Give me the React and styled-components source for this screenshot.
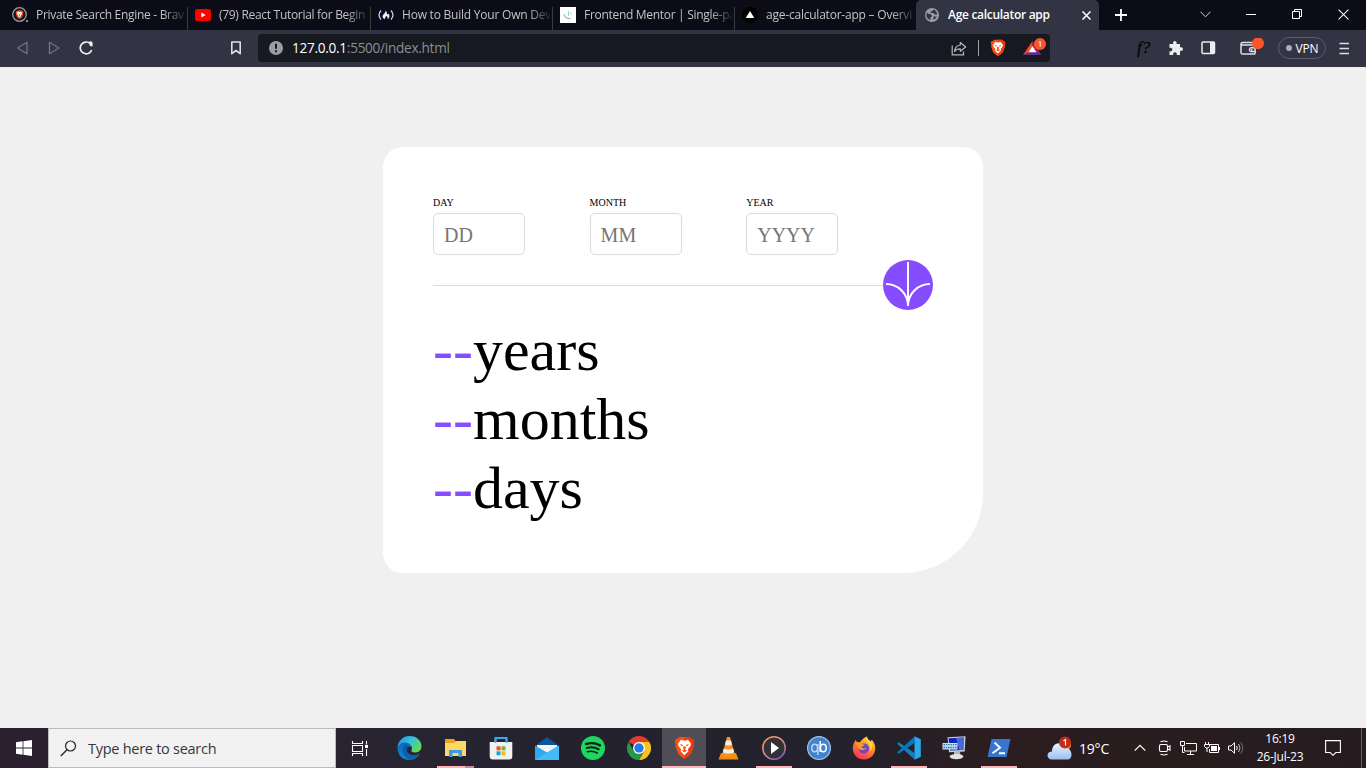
import React from "react";
import styled, { createGlobalStyle } from "styled-components";

const UI = `"Open Sans", "Noto Sans", sans-serif`;
const SERIF = `"Liberation Serif", "Times New Roman", serif`;

const Global = createGlobalStyle`
  *, *::before, *::after { box-sizing: border-box; }
  html, body { margin: 0; padding: 0; background: #f0f0f0; }
  svg { display: block; flex: none; }
`;

const Screen = styled.div`
  width: 1366px;
  height: 768px;
  display: flex;
  flex-direction: column;
  overflow: hidden;
  font-family: ${UI};
`;

/* ---------- browser frame ---------- */

const TabStrip = styled.header`
  height: 30px;
  flex: none;
  display: flex;
  background: #0b0c15;
  color: #fff;
`;

const Tab = styled.div`
  width: ${(p) => (p.$active ? 183 : p.$w || 182)}px;
  flex: none;
  height: 30px;
  display: flex;
  align-items: center;
  gap: ${(p) => p.$gap ?? 8}px;
  padding: 0 ${(p) => (p.$active ? 8 : 2)}px 0 ${(p) => p.$pl ?? 8}px;
  background: ${(p) => (p.$active ? "#323443" : "transparent")};
  border-radius: ${(p) => (p.$active ? "5px 5px 0 0" : 0)};
`;

const TabEdge = styled.i`
  width: 1px;
  height: 23px;
  margin-top: 7px;
  flex: none;
  background: #3b3b3f;
  margin-right: -1px;
`;

const TabTitle = styled.span`
  flex: 1;
  min-width: 0;
  white-space: nowrap;
  font-size: 12px;
  line-height: 18px;
  letter-spacing: ${(p) => p.$ls ?? -0.3}px;
  font-weight: ${(p) => (p.$active ? 600 : 400)};
  color: ${(p) => (p.$active ? "#fff" : "#c3c3c6")};
  mask-image: ${(p) => (p.$active ? "none" : "linear-gradient(to right, #000 85%, transparent 102%)")};
`;

const NewTab = styled.div`
  width: 44px;
  display: flex;
  align-items: center;
  justify-content: center;
`;

const WindowControls = styled.div`
  margin-left: auto;
  display: flex;
`;

const WindowButton = styled.div`
  width: 46px;
  height: 28px;
  display: flex;
  align-items: center;
  justify-content: center;
`;

const Toolbar = styled.nav`
  height: 37px;
  flex: none;
  display: flex;
  align-items: center;
  background: #323443;
  padding: 0 15px 1px 15px;
`;

const NavButtons = styled.div`
  width: 79px;
  display: flex;
  justify-content: space-between;
  align-items: center;
`;

const BookmarkSlot = styled.div`
  margin-left: 134px;
  width: 30px;
  display: flex;
`;

const AddressBar = styled.div`
  width: 792px;
  height: 28px;
  display: flex;
  align-items: center;
  padding: 0 3px 0 11px;
  border-radius: 4px;
  background: #171921;
`;

const Url = styled.span`
  flex: 1;
  margin-left: 9px;
  font-size: 13.6px;
  line-height: 20px;
  letter-spacing: -0.28px;
  color: #8b8d93;
  b { font-weight: 400; color: #fff; }
`;

const AddressDivider = styled.i`
  width: 1px;
  height: 16px;
  background: #a2a3a8;
  margin: 0 11px;
`;

const AddressGap = styled.i`
  width: 17px;
`;

const Extensions = styled.div`
  margin-left: auto;
  display: flex;
  align-items: center;
`;

const Gap = styled.i`
  width: ${(p) => p.$w}px;
`;

const FontFinder = styled.span`
  width: 18px;
  margin-right: 13px;
  font: italic 17px/20px ${SERIF};
  -webkit-text-stroke: 0.3px #050507;
  color: #050507;
  white-space: nowrap;
`;

const VpnPill = styled.div`
  width: 48px;
  height: 22px;
  margin: 0 12px 0 13px;
  display: flex;
  align-items: center;
  justify-content: center;
  gap: 4px;
  border: 1px solid #5a5c6e;
  border-radius: 11px;
  color: #fff;
  font-size: 12px;
  letter-spacing: -0.2px;
  &::before {
    content: "";
    width: 6px;
    height: 6px;
    border-radius: 50%;
    background: #a9abc0;
  }
`;

/* ---------- page ---------- */

const Page = styled.main`
  height: 661px;
  flex: none;
  display: flex;
  justify-content: center;
  align-items: flex-start;
  padding-top: 80px;
  background: #f0f0f0;
`;

const Card = styled.section`
  width: 600px;
  height: 426px;
  padding: 50px;
  background: #fff;
  border-radius: 20px 20px 80px 20px;
  font-family: ${SERIF};
`;

const Fields = styled.div`
  display: flex;
  height: 63px;
  gap: 64.6px;
`;

const Field = styled.label`
  width: 92px;
  display: flex;
  flex-direction: column;
  gap: 5px;
  font-size: 10px;
  line-height: 11px;
  color: #000;
`;

const DateInput = styled.input`
  width: 92px;
  height: 42px;
  padding: 3px 10px 1px;
  border: 1px solid #dcdcdc;
  border-radius: 5px;
  background: #fff;
  outline: none;
  font: 20px ${SERIF};
  &::placeholder { color: #757575; opacity: 1; }
`;

const DividerRow = styled.div`
  height: 50px;
  display: flex;
  align-items: center;
`;

const Rule = styled.i`
  flex: 1;
  height: 1px;
  margin-top: 1px;
  background: #dcdcdc;
`;

const SubmitButton = styled.button`
  width: 50px;
  height: 50px;
  padding: 0;
  border: 0;
  border-radius: 50%;
  background: #854dff;
`;

const Results = styled.div`
  margin-top: 6px;
`;

const ResultLine = styled.p`
  margin: 0;
  font-size: 60px;
  line-height: 69px;
  span { color: #854dff; }
`;

/* ---------- taskbar ---------- */

const Taskbar = styled.footer`
  height: 40px;
  flex: none;
  display: flex;
  background: linear-gradient(to right, #2b2030 0%, #292432 27%, #22212d 50%, #24222c 62%, #2b1d20 72%, #261c1f 100%);
  color: #fff;
`;

const StartButton = styled.div`
  width: 48px;
  display: flex;
  align-items: center;
  justify-content: center;
`;

const SearchBox = styled.div`
  width: 288px;
  height: 40px;
  display: flex;
  align-items: center;
  gap: 11px;
  padding-left: 11px;
  border: 1px solid #bcbcbc;
  background: #f2f2f2;
  color: #373737;
  font-size: 14.5px;
  letter-spacing: -0.27px;
`;

const AppList = styled.div`
  display: flex;
  margin-left: 1px;
`;

const AppButton = styled.div`
  width: ${(p) => p.$w || 45}px;
  height: 40px;
  margin-right: ${(p) => p.$gap || 0}px;
  display: flex;
  flex-direction: column;
  align-items: center;
  background: ${(p) => (p.$active ? "#504d57" : "transparent")};
`;

const AppIcon = styled.div`
  height: 38px;
  display: flex;
  align-items: center;
  padding-top: 2px;
`;

const RunningLine = styled.i`
  height: 2px;
  width: ${(p) => p.$w}px;
  background: ${(p) => (p.$stacked ? "linear-gradient(to right, #ffb3b7 28px, #c48d94 28px)" : "#ffb3b7")};
`;

const Tray = styled.div`
  margin-left: auto;
  display: flex;
  align-items: center;
  height: 40px;
`;

const Temperature = styled.span`
  width: 49px;
  margin-left: 7px;
  font-size: 14px;
  letter-spacing: -0.2px;
`;

const TraySlot = styled.div`
  width: 24px;
  display: flex;
  justify-content: center;
`;

const Clock = styled.div`
  width: 64px;
  display: flex;
  flex-direction: column;
  align-items: center;
  font-size: 12px;
  line-height: 18px;
  letter-spacing: -0.25px;
  white-space: nowrap;
  padding-bottom: 1px;
`;

const Notifications = styled.div`
  width: 42px;
  display: flex;
  justify-content: center;
`;

const DesktopEdge = styled.div`
  width: 5px;
  height: 40px;
  margin-left: 7px;
  border-left: 1px solid #666063;
`;

/* ---------- icons ---------- */

const lion = (
  <>
    <path d="M6 1h12l2.2 2.2L22 3l1 3-1 2.300.4 2.200L19.500 18 17 20.500 12 24 7 20.500 4.500 18 1.600 10.500 2 8.300 1 6 2 3l1.800.2Z" fill="#fb4f16" />
    <path d="M12 1h6l2.200 2.200L22 3l1 3-1 2.300.4 2.200L19.500 18 17 20.500 12 24Z" fill="#f03a0a" />
    <path d="M8 4 12 5l4-1 3.500 4.200-.8 2.600-2.800 3 .6 2.200-1.500 1.200L12 20l-3-2.800L7.500 16l.6-2.200-2.800-3-.8-2.600Z" fill="#fff" />
    <path d="m6.800 8.500 3.400.6-.7 1.900ZM17.200 8.500l-3.400.6.7 1.900ZM10.500 11h3l-.3 2.500L12 14.700l-1.200-1.200ZM9 15.200l3-1.200 3 1.200-3 1.700Z" fill="#f6450f" />
  </>
);

const BraveIcon = ({ w = 18, h = 20 }) => (
  <svg width={w} height={h} viewBox="0 0 24 25" preserveAspectRatio="none">{lion}</svg>
);

const BraveSearchIcon = () => (
  <svg width="17" height="16" viewBox="0 0 17 16">
    <circle cx="7.500" cy="7.500" r="6.800" fill="#17171d" stroke="#9b9ba0" strokeWidth="1.300" />
    <g transform="translate(3.300 3) scale(.35 .38)">{lion}</g>
    <circle cx="15" cy="14" r="1" fill="#bdbdc1" />
  </svg>
);

const YoutubeIcon = () => (
  <svg width="16" height="12" viewBox="0 0 16 12">
    <rect width="16" height="12" rx="2.600" fill="#f00" />
    <path d="m6.300 3.400 4.400 2.600-4.400 2.600Z" fill="#fff" />
  </svg>
);

const CampIcon = () => (
  <svg width="16" height="16" viewBox="0 0 16 16" fill="none">
    <rect width="16" height="16" fill="#0a0a23" />
    <path d="M3 3.500Q-1 8 3 12.500M13 3.500Q17 8 13 12.500" stroke="#d9d9e2" strokeWidth="1.200" />
    <path d="M7.500 3.500c2 1.800.8 3.200 2 3.700.7.300.8-.5.6-1 2.200 2.400 1.500 4.700-.7 6 .6-1.400.2-2.400-1.300-3.500.2 1.400-1.800 1.500-.9 3.500-3-.8-3.300-3.300-1.400-5.200 1.200-1.200 2-2 1.700-3.500Z" fill="#eee" />
  </svg>
);

const MentorIcon = () => (
  <svg width="16" height="16" viewBox="0 0 16 16" fill="none">
    <rect width="16" height="16" fill="#fff" />
    <path d="M4 7c.4 3 3 4.800 6.500 4.500" stroke="#99aecb" strokeWidth="1.200" />
    <path d="M8.500 4v5M10.800 5.500v1.600" stroke="#83cbd3" strokeWidth=".9" />
  </svg>
);

const VercelIcon = () => (
  <svg width="16" height="16" viewBox="0 0 16 16">
    <circle cx="8" cy="8" r="8" fill="#000" />
    <path d="m8 4 4.300 7H3.700Z" fill="#fff" />
  </svg>
);

const GlobeIcon = () => (
  <svg width="14" height="14" viewBox="0 0 14 14">
    <circle cx="7" cy="7" r="7" fill="#9b9da6" />
    <path d="M2 4.500 3.800 6h1.700L7 7.500v1.300L5.600 9l-.2 2.900C3 11.500 1.300 9.500 1.300 7ZM8 1.400 7.500 3l-2 .8.2 1.300h2.600L9.500 6.500h2.900C12.100 3.700 10.200 1.900 8 1.400ZM9 8l1.500.8 1.300-.2c-.6 1.500-1.800 2.700-3.300 3.200l-.3-1.500Z" fill="#343642" />
  </svg>
);

const Cross = ({ s = 10, w = 1.1 }) => (
  <svg width={s} height={s} viewBox="0 0 10 10"><path d="m.5.5 9 9m0-9-9 9" stroke="#fff" strokeWidth={w} /></svg>
);

const ShareIcon = () => (
  <svg width="16" height="15" viewBox="0 0 16 15" fill="none" stroke="#b5b6ba" strokeWidth="1.200">
    <path d="M1.200 4.500v9.400h11.300v-3.400" />
    <path d="M9.300 1.500 14.700 6l-5.400 4.300V7.800C6.500 7.700 4.800 8.500 3.500 10.500 3.900 7 5.800 4.400 9.300 4Z" strokeLinejoin="round" />
  </svg>
);

const BatIcon = () => (
  <svg width="24" height="20" viewBox="0 0 24 20">
    <path d="M9.500 3 0 17l6.500-2.500 3-6Z" fill="#ff4724" />
    <path d="m9.500 3 9 14-5.800-3-3.200-5.500Z" fill="#9e1f63" />
    <path d="M0 17h18.500l-6-3.300h-6Z" fill="#662d91" />
    <path d="m9.500 8 4 6.300h-8Z" fill="#fff" />
    <circle cx="17" cy="6" r="6" fill="#fb542b" />
    <path d="m15.800 4.500 1.400-1v5" stroke="#fff" fill="none" />
  </svg>
);

const WalletIcon = () => (
  <svg width="25" height="20" viewBox="0 0 25 20" fill="none" stroke="#dedee2" strokeWidth="1.500">
    <path d="M13 7H2.500C.7 7 .7 4.500 2.500 4.500H13M1 5.500v9c0 1 .6 1.600 1.600 1.600h11.200c.8 0 1.300-.4 1.300-1.200V7" />
    <path d="M15.500 9.800H11c-1.800 0-2.200 3.700 0 3.700h4.500M11 11.700h1.500" />
    <circle cx="18" cy="5.300" r="6" fill="#fb542b" stroke="none" />
  </svg>
);

const StoreIcon = () => (
  <svg width="24" height="24" viewBox="0 0 24 24">
    <path d="M6.500 7V2h11v5" fill="none" stroke="#2db2e8" strokeWidth="2" />
    <path d="M.7 6h22.600v14.500a3 3 0 0 1-3 3H3.700a3 3 0 0 1-3-3Z" fill="#f1f1f1" />
    <path d="M6.500 2.500V7M17.500 2.500V7" stroke="#2db2e8" strokeWidth="1.600" />
    <path d="M7.500 10.300h4v4h-4Z" fill="#e85424" /><path d="M12.500 10.300h4v4h-4Z" fill="#80b41a" />
    <path d="M7.500 15.300h4v4h-4Z" fill="#12a5e9" /><path d="M12.500 15.300h4v4h-4Z" fill="#f9ba15" />
  </svg>
);

const EdgeIcon = () => (
  <svg width="25" height="24" viewBox="0 0 25 24">
    <defs>
      <linearGradient id="edgeTop" x1="0" x2="1" y2=".6"><stop stopColor="#198cdb" /><stop offset=".5" stopColor="#37bfe0" /><stop offset="1" stopColor="#62dc50" /></linearGradient>
      <linearGradient id="edgeBase" x2=".5" y2="1"><stop stopColor="#0c67b4" /><stop offset="1" stopColor="#1588dc" /></linearGradient>
    </defs>
    <path d="M.5 12C1 4.500 6 0 12.500 0 20 0 24.500 5 24.500 10c0 4.500-3 6.500-6.500 6.500-3 0-4-1.300-3.700-2 1.500-2 .7-6-3.300-6C6 8.500 3 10 .5 12Z" fill="url(#edgeTop)" />
    <path d="M.5 12C1.500 8 5 6.200 8.500 6.400c4 .2 6 2.600 6.200 5.100-3-2.500-6 .5-4.800 3.800 1.500 4.200 7.700 5.500 12.900 2.200C20.500 22 16.500 24 12.500 24 5.500 24 .3 19 .5 12Z" fill="url(#edgeBase)" />
    <path d="M8.500 8c-5 4-3 13 4 15.900 4 0 8-2.300 10.300-6.400-5 3.300-11.400 2-12.900-2.200C8.900 12 10.600 10.500 12 10.200Z" fill="#0b4f94" opacity=".65" />
  </svg>
);

const FolderIcon = () => (
  <svg width="23" height="20" viewBox="0 0 23 20">
    <path d="M1 1h9l1.500 2H22v15H1Z" fill="#e9a51c" />
    <path d="M1 5h9l2-2h10v15H1Z" fill="#ffd766" />
    <path d="M5 19v-7h13v7h-3.500v-4h-6v4Z" fill="#3d9ce0" />
  </svg>
);

const MailIcon = () => (
  <svg width="24" height="23" viewBox="0 0 24 23">
    <path d="M0 9 12 0l12 9Z" fill="#0b559c" />
    <path d="M2 8h20v9H2Z" fill="#f1f3f5" />
    <path d="m0 8.500 12 7 12-7V23H0Z" fill="#31a8ee" />
    <path d="m0 23 24-14.500V23Z" fill="#4dc4fa" opacity=".65" />
  </svg>
);

const SpotifyIcon = () => (
  <svg width="24" height="24" viewBox="0 0 24 24" fill="none" stroke="#10231b" strokeLinecap="round">
    <circle cx="12" cy="12" r="12" fill="#1ed760" stroke="none" />
    <path d="M5 8c5-1.500 10-1 14 1.400" strokeWidth="2.400" />
    <path d="M5.700 12c4.300-1.200 8.500-.7 12 1.300" strokeWidth="2" />
    <path d="M6.300 15.700c3.700-.8 7-.4 10 1.300" strokeWidth="1.600" />
  </svg>
);

const ChromeIcon = () => (
  <svg width="24" height="24" viewBox="0 0 24 24">
    <path d="M12 12 1.600 6a12 12 0 0 1 20.800 0Z" fill="#e33b2e" />
    <path d="M12 6h10.400A12 12 0 0 1 12 24l5.200-9Z" fill="#fcc31e" />
    <path d="M1.600 6 6.800 15 12 18l3.500-1L12 24A12 12 0 0 1 1.600 6Z" fill="#279847" />
    <circle cx="12" cy="12" r="6" fill="#fff" /><circle cx="12" cy="12" r="4.700" fill="#2878e9" />
  </svg>
);

const VlcIcon = () => (
  <svg width="21" height="23" viewBox="0 0 21 23">
    <path d="M3 16h15l2.500 6.500H.5Z" fill="#f38b12" />
    <path d="M9 0h3l5 18c-2 2-11 2-13 0Z" fill="#f7941d" />
    <path d="M8.100 3.500h4.800l1.200 4.300c-2 1-5.100 1-7.200 0ZM5.800 11.500c2 1.400 7.300 1.400 9.400 0l1 3.700c-2.500 1.800-8.800 1.800-11.400 0Z" fill="#f0eeec" />
  </svg>
);

const PlayerIcon = () => (
  <svg width="24" height="24" viewBox="0 0 24 24">
    <defs><linearGradient id="ring" x2=".7" y2="1"><stop stopColor="#ff9852" /><stop offset=".55" stopColor="#e88b8b" /><stop offset="1" stopColor="#8460bd" /></linearGradient></defs>
    <circle cx="12" cy="12" r="11.200" fill="#333138" stroke="url(#ring)" strokeWidth="1.500" />
    <path d="m9 6 8 6-8 6Z" fill="#fff" />
  </svg>
);

const QbIcon = () => (
  <svg width="24" height="24" viewBox="0 0 24 24" fill="none" strokeWidth="1.500">
    <circle cx="12" cy="12" r="11.400" fill="#4383cd" stroke="#a4c5ec" strokeWidth="1.200" />
    <ellipse cx="7.700" cy="12" rx="2.900" ry="3.700" stroke="#bdd6f4" /><path d="M10.800 8v11" stroke="#bdd6f4" />
    <ellipse cx="16.300" cy="12" rx="2.900" ry="3.700" stroke="#fff" /><path d="M13.200 5v11" stroke="#fff" />
  </svg>
);

const FirefoxIcon = () => (
  <svg width="24" height="24" viewBox="0 0 24 24">
    <defs><linearGradient id="fox" x1=".8" x2=".3" y2="1"><stop stopColor="#ffe14a" /><stop offset=".45" stopColor="#ff8b27" /><stop offset="1" stopColor="#f92d5c" /></linearGradient></defs>
    <path d="M3.500 4 5 6l3 .2C10 3.500 12 1.500 15 .5c-.3 2 2 3.500 3.400 5l1.500-1.700c2 2.300 3.800 6 3.300 9.500C22.500 19.500 18 23.500 12 23.500 5.500 23.500.8 18.700.8 12.500.8 9 2 6.500 3.500 4Z" fill="url(#fox)" />
    <path d="M8 9c4-3 9-1 9 3.500 0 3-2.500 5-5.300 5C8.500 17.500 6.500 15 6.500 12l3-.5Z" fill="#7544c8" />
    <path d="M4 7c3-.8 5.200-.3 6 1l2.500.8c-.6 1.800-3 1.500-3.200 2.800 1 .9 3 1.300 5 .2-1 3-6.500 3.200-8.300-.3Z" fill="#ff9727" />
    <path d="M15 .5c-2 3 .5 5 2 8 1.500 2.700 1.400 5.200.5 7 4-3 3.500-7.800.9-10C17 4 15 3 15 .5Z" fill="#ffd43a" />
  </svg>
);

const CodeIcon = () => (
  <svg width="24" height="24" viewBox="0 0 24 24">
    <path d="M1.800 6.200.2 7.700 17.500 23.500V17Z" fill="#127fc4" />
    <path d="m1.800 17.800-1.600-1.500L17.500.5V7Z" fill="#0876ba" />
    <path d="m17.500.3 6.300 3v17.400l-6.300 3Z" fill="#29a8ef" />
  </svg>
);

const RemotePcIcon = () => (
  <svg width="24" height="24" viewBox="0 0 24 24">
    <path d="m5.500 1.200 18-.9-.8 15.200-15.700.8Z" fill="#cdd3da" />
    <path d="m6.500 2.300 15.500-.8-.7 12.500-13.300.4Z" fill="#1124bd" />
    <path d="m14 1.900 8-.4-.7 12.500-4 .1Z" fill="#4a67dc" />
    <path d="M12 15.500h6l.5 4.500h-6.500Z" fill="#b4b5b8" />
    <ellipse cx="14.500" cy="20.600" rx="6.800" ry="2.700" fill="#e3e3df" />
    <path d="M.5 7h15v6.500H.5Z" fill="#c9e4f4" />
    <path d="M1.500 8.700h13M1.500 11.500h13" stroke="#2973b4" strokeWidth="1.300" strokeDasharray="1.500 .8" />
  </svg>
);

const ShellIcon = () => (
  <svg width="24" height="20" viewBox="0 0 24 20">
    <path d="M4.500 1h19L19.500 19H.5Z" fill="#3974cf" />
    <path d="m7.500 4.500 5.500 5.200-7.500 5.500M12 15.300h6" stroke="#fff" strokeWidth="1.900" fill="none" />
  </svg>
);

const TaskViewIcon = () => (
  <svg width="18" height="17" viewBox="0 0 18 17" fill="none" stroke="#fff" strokeWidth="1.100">
    <path d="M1.500 5.500h10v6h-10ZM1.500 1v2.500h10V1M1.500 16v-2.500h10V16M15.500 1v3.500M15.500 9v7" />
    <path d="M14 5h3v3h-3Z" fill="#fff" stroke="none" />
  </svg>
);

const WeatherIcon = () => (
  <svg width="25" height="24" viewBox="0 0 25 24">
    <defs><linearGradient id="cloud" y2="1" x2="0"><stop stopColor="#ecf3ff" /><stop offset="1" stopColor="#9abff3" /></linearGradient></defs>
    <circle cx="19" cy="9" r="5" fill="#f0961d" />
    <path d="M5 23.500c-6 0-6-8 0-8C5 6 15.500 4.500 17 12c8-2 10.500 11.500 3 11.500Z" fill="url(#cloud)" />
    <circle cx="18" cy="6.500" r="6" fill="#c42b1c" />
    <path d="m16.500 5 2-1.500v6" fill="none" stroke="#fff" strokeWidth="1.100" />
  </svg>
);

const tabs = [
  { title: "Private Search Engine - Brav", icon: <BraveSearchIcon />, w: 187, pl: 12, gap: 7 },
  { title: "(79) React Tutorial for Begin", icon: <YoutubeIcon />, w: 183 },
  { title: "How to Build Your Own Dev", icon: <CampIcon />, w: 182, ls: -0.22 },
  { title: "Frontend Mentor | Single-pa", icon: <MentorIcon />, w: 182, ls: -0.3 },
  { title: "age-calculator-app – Overvi", icon: <VercelIcon />, w: 182, ls: -0.22 },
];

const apps = [
  { icon: <TaskViewIcon />, w: 46, gap: 3 },
  { icon: <EdgeIcon />, w: 46 },
  { icon: <FolderIcon />, w: 46, line: 37, stacked: true },
  { icon: <StoreIcon />, w: 46 },
  { icon: <MailIcon />, w: 46 },
  { icon: <SpotifyIcon />, w: 46 },
  { icon: <ChromeIcon />, w: 46 },
  { icon: <BraveIcon w={21} h={24} />, w: 44, line: 44, active: true },
  { icon: <VlcIcon /> },
  { icon: <PlayerIcon />, line: 36 },
  { icon: <QbIcon /> },
  { icon: <FirefoxIcon /> },
  { icon: <CodeIcon />, line: 36 },
  { icon: <RemotePcIcon /> },
  { icon: <ShellIcon />, line: 36 },
];

const fields = [["DAY", "DD"], ["MONTH", "MM"], ["YEAR", "YYYY"]];

export default function App() {
  return (
    <Screen>
      <Global />
      <TabStrip>
        {tabs.map((t, i) => (
          <React.Fragment key={t.title}>
            <Tab $w={t.w} $pl={t.pl} $gap={t.gap}>{t.icon}<TabTitle $ls={t.ls}>{t.title}</TabTitle></Tab>
            {i < 4 && <TabEdge />}
          </React.Fragment>
        ))}
        <Tab $active $pl={9} $gap={9}>
          <GlobeIcon /><TabTitle $active $ls={-0.3}>Age calculator app</TabTitle><Cross s={9} w={1.7} />
        </Tab>
        <NewTab>
          <svg width="12" height="12" viewBox="0 0 12 12"><path d="M6 0v12M0 6h12" stroke="#fff" strokeWidth="1.800" /></svg>
        </NewTab>
        <WindowControls>
          <WindowButton><svg width="11" height="7" viewBox="0 0 11 7"><path d="m.5.8 5 5 5-5" fill="none" stroke="#d5d5d8" /></svg></WindowButton>
          <WindowButton><svg width="10" height="1"><path d="M0 .5h10" stroke="#fff" /></svg></WindowButton>
          <WindowButton><svg width="10" height="10" viewBox="0 0 10 10" fill="none" stroke="#fff"><path d="M.5 2.500h7v7h-7ZM2.500 2.500v-2h7v7h-2" /></svg></WindowButton>
          <WindowButton><Cross s={11} w={0.95} /></WindowButton>
        </WindowControls>
      </TabStrip>

      <Toolbar>
        <NavButtons>
          <svg width="13" height="14" viewBox="0 0 13 14"><path d="M12 1.300v11.400L2.500 7Z" fill="none" stroke="#727482" strokeWidth="1.300" strokeLinejoin="round" /></svg>
          <svg width="13" height="14" viewBox="0 0 13 14"><path d="M2.500 1.300v11.400L12 7Z" fill="none" stroke="#727482" strokeWidth="1.300" strokeLinejoin="round" /></svg>
          <svg width="15" height="14" viewBox="0 0 15 14"><path d="M11.200 2.600A5.900 5.900 0 1 0 12.700 9" fill="none" stroke="#eeeef0" strokeWidth="1.700" /><path d="M9.600 1.500a2.200 2.200 0 0 1 4 .2v3.600h-2.500Z" fill="#eeeef0" /></svg>
        </NavButtons>
        <BookmarkSlot>
          <svg width="16" height="14" viewBox="0 0 16 14"><path d="M3.800 1h8.400v11.700L8 9.500l-4.200 3.200Z" fill="none" stroke="#dedee2" strokeWidth="1.600" strokeLinejoin="round" /></svg>
        </BookmarkSlot>
        <AddressBar>
          <svg width="14" height="14" viewBox="0 0 14 14"><circle cx="7" cy="7" r="7" fill="#9b9da3" /><path d="M7 2.800v5M7 9.300v2" stroke="#171921" strokeWidth="2" /></svg>
          <Url><b>127.0.0.1</b>:5500/index.html</Url>
          <ShareIcon />
          <AddressDivider />
          <BraveIcon w={16} h={18} />
          <AddressGap />
          <BatIcon />
        </AddressBar>
        <Extensions>
          <FontFinder>f?</FontFinder>
          <svg width="16" height="16" viewBox="0 0 16 16"><path d="M1.500 4h3.700c-1.200-4 4.400-4 3.300 0H12v3.300c4-1.200 4 4.500 0 3.500V15H8.800c.8-3.700-4.400-3.700-3.600 0H1.500v-3.700c3.800.8 3.800-4.300 0-3.500Z" fill="#ececee" /></svg>
          <Gap $w={17} />
          <svg width="15" height="14" viewBox="0 0 15 14"><rect x="1" y="1" width="12.500" height="11.500" rx="1" fill="none" stroke="#ececee" strokeWidth="1.500" /><path d="M9 1h4v11.500H9Z" fill="#ececee" /></svg>
          <Gap $w={24} />
          <WalletIcon />
          <VpnPill>VPN</VpnPill>
          <svg width="13" height="13" viewBox="0 0 13 13"><path d="M1.500 1.500h9.500M1.500 6.500h9.500M1.500 11.500h9.500" stroke="#dedee2" strokeWidth="1.600" /></svg>
        </Extensions>
      </Toolbar>

      <Page>
        <Card>
          <Fields>
            {fields.map(([label, hint]) => (
              <Field key={label}>{label}<DateInput placeholder={hint} /></Field>
            ))}
          </Fields>
          <DividerRow>
            <Rule />
            <SubmitButton aria-label="Calculate">
              <svg width="50" height="50" viewBox="0 0 50 50"><path d="M25 2v44M3 24c11.700 0 22 9.300 22 22 0-12.700 10.300-22 22-22" fill="none" stroke="#fff" strokeWidth="2" /></svg>
            </SubmitButton>
          </DividerRow>
          <Results>
            {["years", "months", "days"].map((u) => (
              <ResultLine key={u}><span>--</span>{u}</ResultLine>
            ))}
          </Results>
        </Card>
      </Page>

      <Taskbar>
        <StartButton>
          <svg width="16" height="16" viewBox="0 0 16 16"><path d="M0 2.200 6.600 1.300v6.200H0ZM7.400 1.200 16 0v7.500H7.400ZM0 8.400h6.600v6.300L0 13.800ZM7.400 8.400H16V16l-8.600-1.200Z" fill="#fff" /></svg>
        </StartButton>
        <SearchBox>
          <svg width="17" height="17" viewBox="0 0 17 17"><circle cx="10.500" cy="6" r="5" fill="none" stroke="#222" strokeWidth="1.200" /><path d="M7 9.700.8 16" stroke="#222" strokeWidth="1.300" /></svg>
          Type here to search
        </SearchBox>
        <AppList>
          {apps.map((a, i) => (
            <AppButton key={i} $w={a.w} $gap={a.gap} $active={a.active}>
              <AppIcon>{a.icon}</AppIcon>
              {a.line && <RunningLine $w={a.line} $stacked={a.stacked} />}
            </AppButton>
          ))}
        </AppList>
        <Tray>
          <WeatherIcon />
          <Temperature>19°C</Temperature>
          <TraySlot><svg width="12" height="8" viewBox="0 0 12 8"><path d="m.7 6.700 5.300-5.300 5.300 5.300" fill="none" stroke="#fff" strokeWidth="1.200" /></svg></TraySlot>
          <TraySlot><svg width="13" height="16" viewBox="0 0 13 16" fill="none" stroke="#fff" strokeWidth="1.100"><path d="M2.500 1.800q3.500-1.500 7 0M2.500 14.200q3.500 1.500 7 0M9.500 7l2.500-1.200v4.400L9.500 9" /><rect x="1.500" y="4.500" width="8" height="7" rx="1.500" /></svg></TraySlot>
          <TraySlot><svg width="17" height="14" viewBox="0 0 17 14" fill="none" stroke="#fff"><path d="M6 2.500h10.500v7.500H4.500V6M10.500 10v3M7 13.500h7M.5.5h4v4h-4ZM2.500 4.500v7h2" /></svg></TraySlot>
          <TraySlot><svg width="17" height="14" viewBox="0 0 17 14" fill="none" stroke="#fff"><path d="M5.500 3.500h9v8h-9V8M15.500 6v3M1.500 1v2.500M4.500 1v2.500M.5 3.500h5v2L4 7H2L.5 5.500ZM3 7v4" /><path d="M7 5h6v5H7Z" fill="#fff" stroke="none" /></svg></TraySlot>
          <TraySlot><svg width="17" height="14" viewBox="0 0 17 14" fill="none" stroke="#fff"><path d="M.5 5h2.500L6.500 1.700v10.600L3 9H.5ZM8.500 5q1.500 2 0 4" /><path d="M10.500 3q3 4 0 8" stroke="#bbb" /><path d="M12.700 1.300q4 5.700 0 11.400" stroke="#706b6d" /></svg></TraySlot>
          <Clock><span>16:19</span><span>26-Jul-23</span></Clock>
          <Notifications>
            <svg width="16" height="16" viewBox="0 0 16 16"><path d="M.6.600h14.800v11.900h-4.600L8 15.300l-2.800-2.800H.6Z" fill="none" stroke="#fff" strokeWidth="1.100" /></svg>
          </Notifications>
          <DesktopEdge />
        </Tray>
      </Taskbar>
    </Screen>
  );
}
